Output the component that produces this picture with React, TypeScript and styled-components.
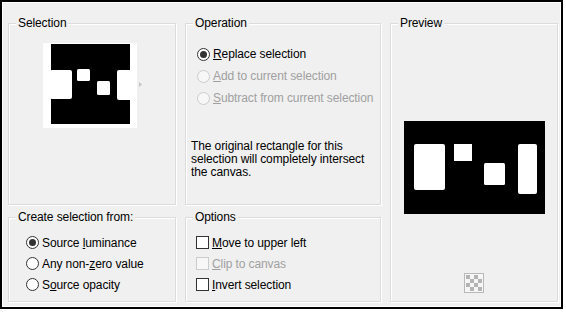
import React from "react"
import styled, { createGlobalStyle } from "styled-components"

const GlobalStyle = createGlobalStyle`
  html, body {
    margin: 0;
    padding: 0;
    background: #ffffff;
  }
  body {
    font-family: "Liberation Sans", Arial, sans-serif;
    font-size: 12px;
    letter-spacing: -0.1px;
    color: #000000;
  }
`

const Frame = styled.div`
  width: 563px;
  height: 309px;
  box-sizing: border-box;
  border: 2px solid #000000;
  background: #f0f0f0;
  box-shadow: inset 0 0 0 1px #ffffff;
  padding: 21px 0 0 6px;
`

const Layout = styled.div`
  display: grid;
  grid-template-columns: 168px 196px 168px;
  grid-template-rows: 182px 85px;
  column-gap: 9px;
  row-gap: 12px;
`

const GroupBox = styled.section<{ $span?: boolean }>`
  display: flex;
  flex-direction: column;
  min-width: 0;
  border: 1px solid #dcdcdc;
  box-shadow: 1px 1px 0 #ffffff, inset 1px 1px 0 #ffffff;
  grid-row: ${(props) => (props.$span ? "1 / span 2" : "auto")};
  grid-column: ${(props) => (props.$span ? "3" : "auto")};
`

const GroupTitle = styled.div`
  align-self: flex-start;
  margin: -8px 0 0 7px;
  padding: 0 2px;
  line-height: 15px;
  background: #f0f0f0;
`

const Thumb = styled.div`
  margin: 12px 0 0 34px;
  display: flex;
`

const OptionList = styled.div<{ $top: number; $left: number; $row: number }>`
  display: flex;
  flex-direction: column;
  margin: ${(props) => props.$top}px 0 0 ${(props) => props.$left}px;

  & > * {
    height: ${(props) => props.$row}px;
  }
`

const OptionRow = styled.div<{ $disabled?: boolean }>`
  display: flex;
  align-items: center;
  gap: 3px;
  color: ${(props) => (props.$disabled ? "#a0a0a0" : "#000000")};
  white-space: nowrap;
`

const RadioCircle = styled.span<{ $checked?: boolean; $disabled?: boolean }>`
  flex: none;
  width: 13px;
  height: 13px;
  box-sizing: border-box;
  border-radius: 50%;
  border: 1px solid ${(props) => (props.$disabled ? "#cccccc" : "#333333")};
  background: ${(props) => (props.$disabled ? "#f7f7f7" : "#ffffff")};
  display: flex;
  align-items: center;
  justify-content: center;

  &::after {
    content: "";
    display: ${(props) => (props.$checked ? "block" : "none")};
    width: 7px;
    height: 7px;
    border-radius: 50%;
    background: #333333;
  }
`

const CheckSquare = styled.span<{ $disabled?: boolean }>`
  flex: none;
  width: 13px;
  height: 13px;
  box-sizing: border-box;
  border: 1px solid ${(props) => (props.$disabled ? "#cccccc" : "#333333")};
  background: ${(props) => (props.$disabled ? "#f7f7f7" : "#ffffff")};
`

const Note = styled.p`
  margin: 31px 0 0 5px;
  line-height: 13px;
  width: 180px;
`

const PreviewBody = styled.div`
  flex: 1;
  display: flex;
  flex-direction: column;
  align-items: center;
`

const PreviewImage = styled.div`
  margin-top: 90px;
  display: flex;
`

const Spacer = styled.div`
  flex: 1;
`

const CheckerButton = styled.div`
  margin-bottom: 8px;
  display: flex;
`

function Radio({ label, checked, disabled }: { label: React.ReactNode; checked?: boolean; disabled?: boolean }) {
  return (
    <OptionRow $disabled={disabled}>
      <RadioCircle $checked={checked} $disabled={disabled} />
      <span>{label}</span>
    </OptionRow>
  )
}

function Check({ label, disabled }: { label: React.ReactNode; disabled?: boolean }) {
  return (
    <OptionRow $disabled={disabled}>
      <CheckSquare $disabled={disabled} />
      <span>{label}</span>
    </OptionRow>
  )
}

function SelectionThumb() {
  return (
    <svg width="100" height="85" viewBox="0 0 100 85">
      <rect x="0" y="0" width="94" height="85" fill="#ffffff" />
      <rect x="8" y="1" width="79" height="80" fill="#000000" />
      <rect x="7" y="27" width="22" height="29" rx="2" fill="#ffffff" />
      <rect x="34" y="26" width="13" height="12" rx="1.5" fill="#ffffff" />
      <rect x="54" y="38" width="13" height="14" rx="1.5" fill="#ffffff" />
      <rect x="74" y="27" width="18" height="30" rx="2" fill="#ffffff" />
      <path d="M96 39 L99 41.5 L96 44 Z" fill="#c4c4c4" />
    </svg>
  )
}

function PreviewPicture() {
  return (
    <svg width="141" height="93" viewBox="0 0 141 93">
      <rect x="0" y="0" width="141" height="93" fill="#000000" />
      <rect x="10" y="23" width="31" height="46" rx="2" fill="#ffffff" />
      <rect x="50" y="23" width="18" height="17" fill="#ffffff" />
      <rect x="80" y="42" width="21" height="22" rx="1.5" fill="#ffffff" />
      <rect x="114" y="23" width="19" height="50" rx="2" fill="#ffffff" />
    </svg>
  )
}

function CheckerIcon() {
  const cells = []
  for (let r = 0; r < 4; r++) {
    for (let c = 0; c < 4; c++) {
      cells.push(
        <rect
          key={`${r}-${c}`}
          x={2 + c * 4}
          y={2 + r * 4}
          width="4"
          height="4"
          fill={(r + c) % 2 === 0 ? "#b4b4b4" : "#f6f6f6"}
        />
      )
    }
  }
  return (
    <svg width="20" height="20" viewBox="0 0 20 20">
      <rect x="0.5" y="0.5" width="19" height="19" fill="#f6f6f6" stroke="#b9b9b9" />
      {cells}
    </svg>
  )
}

export default function App() {
  return (
    <>
      <GlobalStyle />
      <Frame>
        <Layout>
          <GroupBox>
            <GroupTitle>Selection</GroupTitle>
            <Thumb>
              <SelectionThumb />
            </Thumb>
          </GroupBox>

          <GroupBox>
            <GroupTitle>Operation</GroupTitle>
            <OptionList $top={12} $left={11} $row={22}>
              <Radio checked label={<><u>R</u>eplace selection</>} />
              <Radio disabled label={<><u>A</u>dd to current selection</>} />
              <Radio disabled label={<><u>S</u>ubtract from current selection</>} />
            </OptionList>
            <Note>
              The original rectangle for this selection will completely intersect the canvas.
            </Note>
          </GroupBox>

          <GroupBox $span>
            <GroupTitle>Preview</GroupTitle>
            <PreviewBody>
              <PreviewImage>
                <PreviewPicture />
              </PreviewImage>
              <Spacer />
              <CheckerButton>
                <CheckerIcon />
              </CheckerButton>
            </PreviewBody>
          </GroupBox>

          <GroupBox>
            <GroupTitle>Create selection from:</GroupTitle>
            <OptionList $top={7} $left={17} $row={21}>
              <Radio checked label={<>Source <u>l</u>uminance</>} />
              <Radio label={<>Any non-<u>z</u>ero value</>} />
              <Radio label={<>S<u>o</u>urce opacity</>} />
            </OptionList>
          </GroupBox>

          <GroupBox>
            <GroupTitle>Options</GroupTitle>
            <OptionList $top={7} $left={10} $row={21}>
              <Check label={<><u>M</u>ove to upper left</>} />
              <Check disabled label={<><u>C</u>lip to canvas</>} />
              <Check label={<><u>I</u>nvert selection</>} />
            </OptionList>
          </GroupBox>
        </Layout>
      </Frame>
    </>
  )
}
